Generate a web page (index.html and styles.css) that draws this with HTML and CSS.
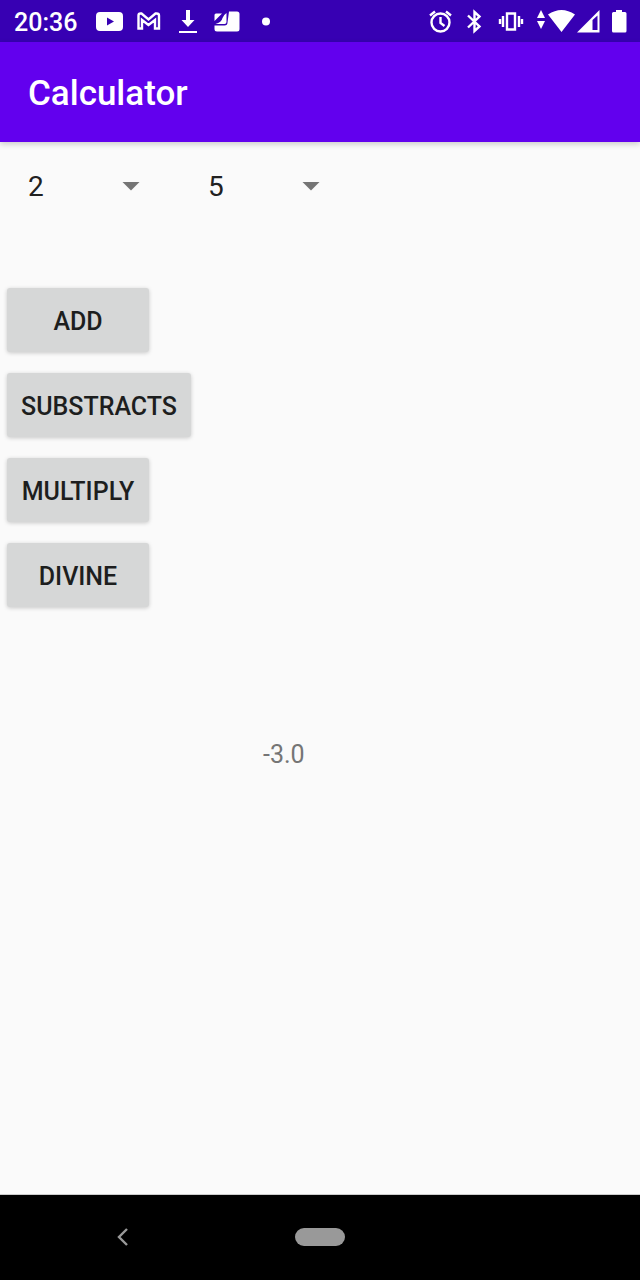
FILE: index.html
```html
<!DOCTYPE html>
<html lang="en">
<head>
<meta charset="utf-8">
<meta name="viewport" content="width=device-width, initial-scale=1">
<title>Calculator</title>
<link rel="stylesheet" href="styles.css">
</head>
<body>
<div class="screen">
  <div class="status-bar">
    <div class="status-group">
      <time class="clock">20:36</time>
      <svg class="icon" viewBox="90 0 39 42" width="39" height="42" aria-hidden="true"><path fill-rule="evenodd" d="M100 12h19q4 0 4 4v11q0 4-4 4h-19q-4 0-4-4V16q0-4 4-4zM107 17.500v8l7-4z"/></svg>
      <svg class="icon" viewBox="129 0 39 42" width="39" height="42" aria-hidden="true"><path class="line" d="M138.500 28.500V15.500q0-2 2-2h1l7 6 7-6h1q2.500 0 2.500 2v13h-4V20l-6.500 5-6.500-5v8.500z"/></svg>
      <svg class="icon" viewBox="168 0 39 42" width="39" height="42" aria-hidden="true"><path d="M186 10h4v10h4.500l-6.500 7-6.500-7h4.500zM179 31h18v2h-18z"/></svg>
      <svg class="icon" viewBox="207 0 39 42" width="39" height="42" aria-hidden="true"><path d="M229 11.500h8q2.500 0 2.500 2.500v15q0 2.500-2.500 2.500h-20q-2.500 0-2.500-2.500v-3.500h10q3 0 3-3z"/><path d="M216 13.500h6L214.500 21v-6q0-1.500 1.500-1.500zM226.500 13v9q0 2-2 2h-9q6-1.500 7-6 1-3 4-5z"/></svg>
      <svg class="icon" viewBox="246 0 39 42" width="39" height="42" aria-hidden="true"><circle cx="266" cy="21.500" r="4"/></svg>
    </div>
    <div class="status-group">
      <svg class="icon" viewBox="424 0 34 42" width="34" height="42" aria-hidden="true"><g class="line"><circle cx="440.500" cy="22.500" r="9"/><path d="M440.500 17v6l4 3M430 15.500l5-4M451 15.500l-5-4"/></g></svg>
      <svg class="icon" viewBox="458 0 34 42" width="34" height="42" aria-hidden="true"><path class="line" d="M468 15.500l11.500 11-5 4.500V12l5 4.500-11.500 11"/></svg>
      <svg class="icon" viewBox="492 0 38 42" width="38" height="42" aria-hidden="true"><path class="line" d="M507 13.500h8v16h-8zM503 16v11M519 16v11M500 19v5M522 19v5"/></svg>
      <svg class="icon" viewBox="530 0 46 42" width="46" height="42" aria-hidden="true"><path d="M541 10l4 8h-8zM541 29l4-8h-8zM548 14.500q13.500-9 27 0L561.500 32z"/></svg>
      <svg class="icon" viewBox="576 0 28 42" width="28" height="42" aria-hidden="true"><path fill-rule="evenodd" d="M577 32.500L599.500 10v22.500zM592.500 20v10h5V15.500z"/></svg>
      <svg class="icon" viewBox="604 0 36 42" width="36" height="42" aria-hidden="true"><path d="M616 10h6v2h3q1.500 0 1.500 1.500V31q0 1.500-1.500 1.500h-11.500q-1.500 0-1.500-1.500V13.500q0-1.500 1.500-1.500h2.500z"/></svg>
    </div>
  </div>
  <header class="app-bar"><h1 class="title">Calculator</h1></header>
  <main class="content">
    <div class="operands">
      <div class="spinner">
        <select class="spinner-select" aria-label="First number"><option>1</option><option selected>2</option><option>3</option><option>4</option><option>5</option></select>
        <span class="spinner-arrow"></span>
      </div>
      <div class="spinner">
        <select class="spinner-select" aria-label="Second number"><option>1</option><option>2</option><option>3</option><option>4</option><option selected>5</option></select>
        <span class="spinner-arrow"></span>
      </div>
    </div>
    <div class="operations">
      <button class="operation" type="button">ADD</button>
      <button class="operation" type="button">SUBSTRACTS</button>
      <button class="operation" type="button">MULTIPLY</button>
      <button class="operation" type="button">DIVINE</button>
    </div>
    <output class="result">-3.0</output>
  </main>
  <nav class="nav-bar" aria-label="System">
    <button class="nav-button" type="button" aria-label="Back"><svg viewBox="0 0 20 24" width="20" height="24" aria-hidden="true"><path class="chevron" d="M14 4L6 12l8 8"/></svg></button>
    <button class="nav-button" type="button" aria-label="Home"><span class="home-pill"></span></button>
  </nav>
</div>
</body>
</html>
```
FILE: styles.css
```css
* {
  box-sizing: border-box;
}

body {
  margin: 0;
  background: #fafafa;
  color: #1d1e1e;
  font-family: Roboto, sans-serif;
}

.screen {
  display: flex;
  flex-direction: column;
  min-height: 100vh;
}

.status-bar {
  display: flex;
  justify-content: space-between;
  height: 42px;
  background: #3700b3;
  color: #fff;
}

.status-group {
  display: flex;
  align-items: center;
}

.clock {
  width: 90px;
  padding: 4px 0 0 14px;
  font-size: 25px;
  font-weight: 500;
  line-height: 38px;
}

.icon {
  display: block;
  fill: #fff;
}

.line {
  fill: none;
  stroke: #fff;
  stroke-width: 2.4;
}

.app-bar {
  display: flex;
  align-items: center;
  height: 100px;
  padding: 4px 28px 0;
  background: #6200ee;
  box-shadow: 0 2px 6px rgba(0, 0, 0, 0.2);
  color: #fff;
}

.title {
  margin: 0;
  font-size: 35px;
  font-weight: 500;
  line-height: 42px;
}

.content {
  display: flex;
  flex: 1;
  flex-direction: column;
  align-items: flex-start;
  padding-top: 22px;
}

.operands {
  display: flex;
}

.spinner {
  display: grid;
  align-items: center;
  width: 180px;
  height: 44px;
}

.spinner-select {
  grid-area: 1 / 1;
  width: 100%;
  height: 100%;
  padding: 2px 0 0 28px;
  border: 0;
  appearance: none;
  background: transparent;
  color: #212121;
  font: 400 28px/42px Roboto, sans-serif;
}

.spinner-arrow {
  grid-area: 1 / 1;
  justify-self: end;
  width: 18px;
  height: 9px;
  margin-right: 40px;
  background: #757575;
  clip-path: polygon(0 0, 100% 0, 50% 100%);
  pointer-events: none;
}

.operations {
  display: flex;
  flex-direction: column;
  align-items: flex-start;
  gap: 21px;
  padding: 80px 7px 0;
}

.operation {
  min-width: 142px;
  height: 64px;
  padding: 4px 14px 0;
  border: 0;
  border-radius: 3px;
  background: #d6d7d7;
  box-shadow: 0 1px 4px rgba(0, 0, 0, 0.2);
  color: #1d1e1e;
  font: 500 25px/32px Roboto, sans-serif;
}

.result {
  margin: 133px 0 0 263px;
  color: #757575;
  font-size: 25px;
  line-height: 30px;
}

.nav-bar {
  display: grid;
  grid-template-columns: repeat(13, 1fr);
  align-items: center;
  height: 86px;
  padding-bottom: 2px;
  border-top: 1px solid #ccc;
  background: #000;
}

.nav-button {
  display: grid;
  grid-column: 2 / 5;
  grid-row: 1;
  place-items: center;
  height: 64px;
  padding: 0;
  border: 0;
  background: transparent;
}

.nav-button:last-child {
  grid-column: 6 / 9;
}

.chevron {
  fill: none;
  stroke: #999;
  stroke-width: 2.4;
}

.home-pill {
  width: 50px;
  height: 18px;
  border-radius: 9px;
  background: #999;
}
```
